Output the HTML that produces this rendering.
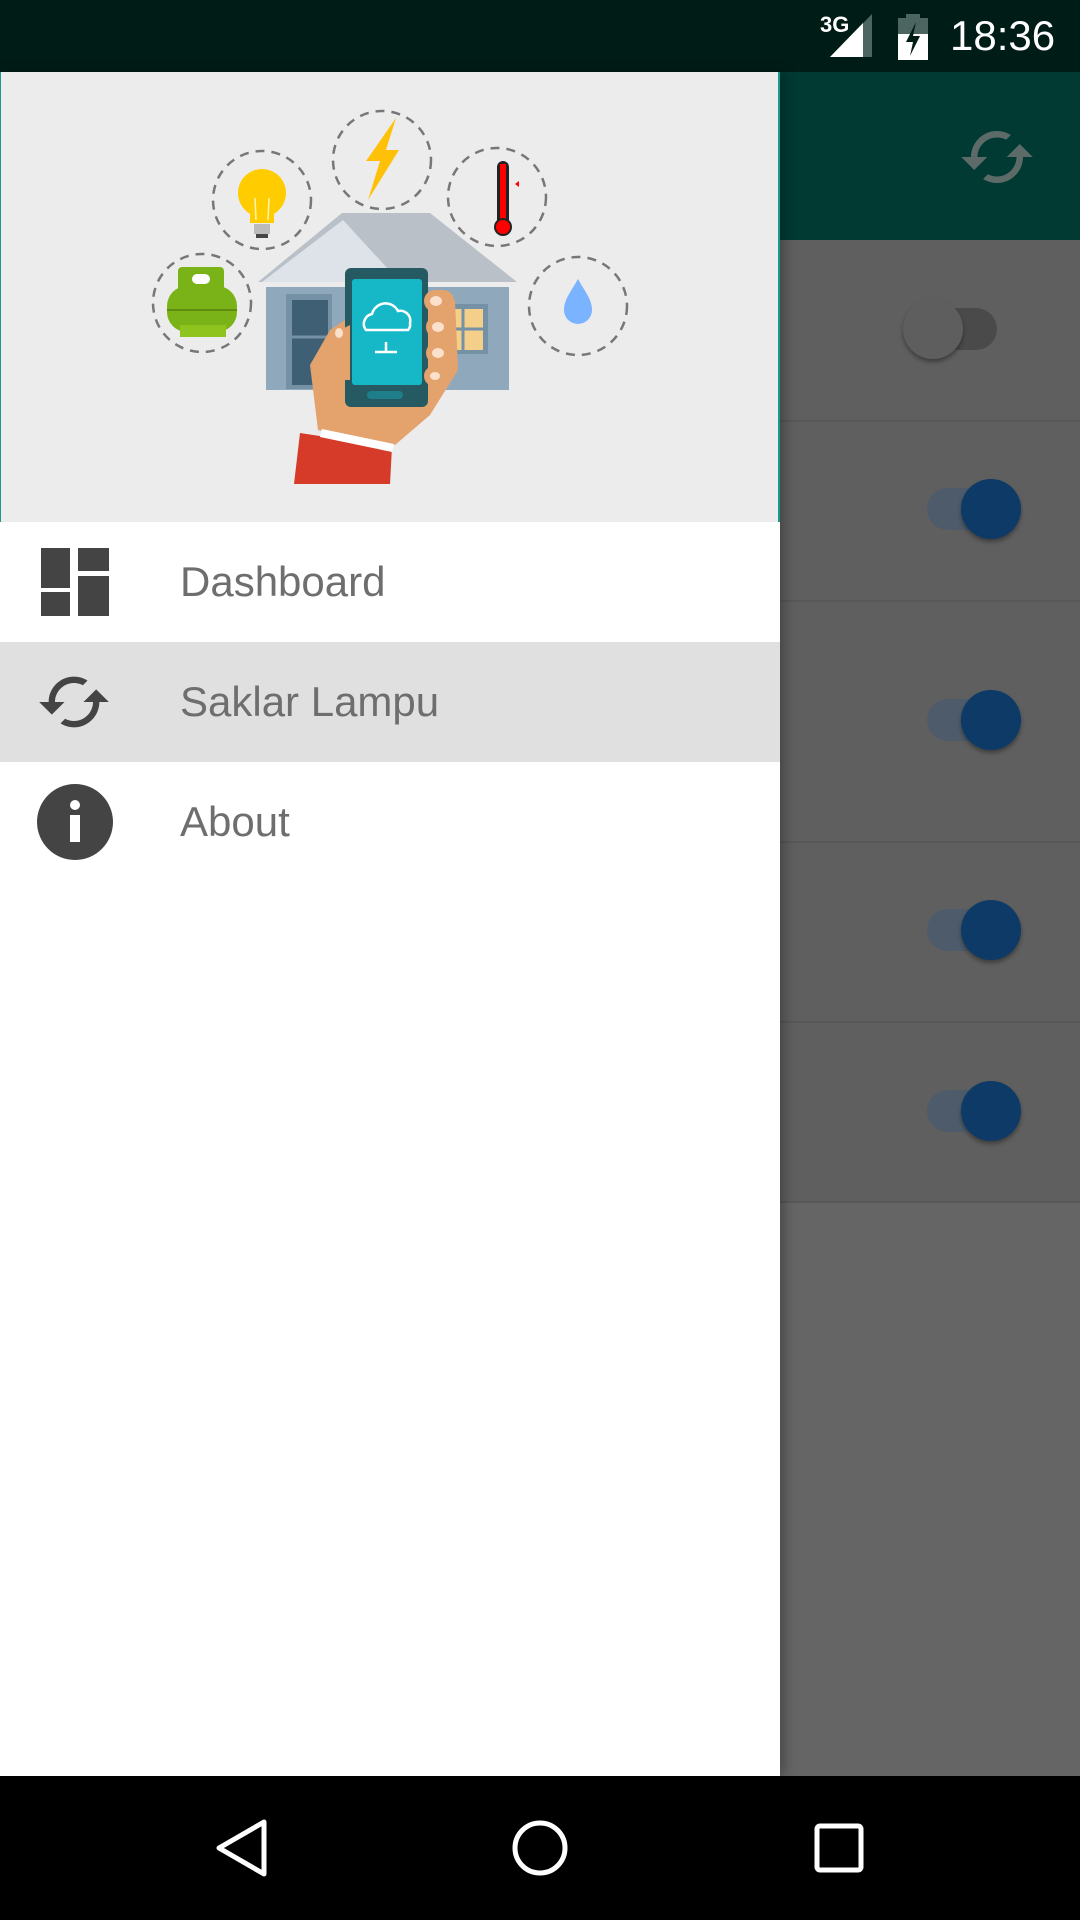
<!DOCTYPE html>
<html><head><meta charset="utf-8"><style>
*{margin:0;padding:0;box-sizing:border-box}
body{width:1080px;height:1920px;position:relative;overflow:hidden;background:#666;font-family:"Liberation Sans",sans-serif}
.abs{position:absolute}
.sep{position:absolute;left:780px;width:300px;height:2px;background:#585858}
.track{position:absolute;width:72px;height:42px;border-radius:21px}
.thumb{position:absolute;width:60px;height:60px;border-radius:50%;box-shadow:0 3px 4px rgba(0,0,0,.35)}
.item{position:absolute;left:0;width:780px;height:120px}
.item span{position:absolute;left:180px;top:36px;font-size:42px;color:#6e6e6e}
</style></head><body>
<div class="abs" style="left:0;top:0;width:1080px;height:72px;background:#001c17"></div>
<div class="abs" style="left:820px;top:12px;color:#fff;font-size:22px;font-weight:bold">3G</div>
<svg class="abs" style="left:830px;top:14px" width="45" height="45"><polygon points="42,0 42,43 0,43" fill="#4d6560"/><polygon points="33,9 33,43 0,43" fill="#fff"/></svg>
<svg class="abs" style="left:898px;top:14px" width="30" height="46"><rect x="8" y="0" width="14" height="5" fill="#4d6560"/><rect x="0" y="4" width="30" height="42" fill="#4d6560"/><rect x="0" y="20" width="30" height="26" fill="#fff"/><polygon points="18,8 8,28 15,28 12,42 22,22 15,22" fill="#001c17"/></svg>
<div class="abs" style="left:950px;top:12px;color:#fff;font-size:42px">18:36</div>
<div class="abs" style="left:780px;top:72px;width:300px;height:168px;background:#003a33"></div>
<svg class="abs" style="left:955px;top:118px" width="84" height="78" viewBox="0 0 24 24"><path fill="#5d6b68" d="M12 4V1L8 5l4 4V6c3.3 0 6 2.7 6 6 0 1-.25 2-.7 2.8l1.46 1.46C19.54 15.03 20 13.57 20 12c0-4.42-3.58-8-8-8zm0 14c-3.3 0-6-2.7-6-6 0-1 .25-2 .7-2.8L5.24 7.74C4.46 8.97 4 10.430 4 12c0 4.42 3.58 8 8 8v3l4-4-4-4v3z" transform="rotate(90 12 12)"/></svg>
<div class="abs" style="left:780px;top:240px;width:300px;height:1536px;background:#656565"></div>
<div class="abs" style="left:780px;top:240px;width:300px;height:962px;background:#5f5f5f"></div>
<div class="sep" style="top:420px"></div><div class="sep" style="top:600px"></div><div class="sep" style="top:841px"></div><div class="sep" style="top:1021px"></div><div class="sep" style="top:1201px"></div>
<div class="track" style="left:925px;top:308px;background:#4a4a4a"></div><div class="thumb" style="left:903px;top:299px;background:#5e5e5e"></div>
<div class="track" style="left:927px;top:488px;background:#4e5b6a"></div><div class="thumb" style="left:961px;top:479px;background:#0d3a66"></div>
<div class="track" style="left:927px;top:699px;background:#4e5b6a"></div><div class="thumb" style="left:961px;top:690px;background:#0d3a66"></div>
<div class="track" style="left:927px;top:909px;background:#4e5b6a"></div><div class="thumb" style="left:961px;top:900px;background:#0d3a66"></div>
<div class="track" style="left:927px;top:1090px;background:#4e5b6a"></div><div class="thumb" style="left:961px;top:1081px;background:#0d3a66"></div>
<div class="abs" style="left:0;top:72px;width:780px;height:1704px;background:#fff;box-shadow:4px 0 12px rgba(0,0,0,.3)"></div>
<div class="abs" style="left:0;top:72px;width:780px;height:450px;background:#ececec;border-left:1px solid #1a9a8a;border-right:2px solid #1a9a8a"></div>
<svg class="abs" style="left:0;top:0" width="780" height="522">
<g fill="none" stroke="#777" stroke-width="2.5" stroke-dasharray="9 7">
<circle cx="262" cy="200" r="49"/><circle cx="382" cy="160" r="49"/><circle cx="497" cy="197" r="49"/><circle cx="202" cy="303" r="49"/><circle cx="578" cy="306" r="49"/></g>
<circle cx="262" cy="193" r="24" fill="#ffcc00"/><rect x="250" y="205" width="24" height="18" fill="#ffcc00"/>
<rect x="254" y="224" width="16" height="10" fill="#bbb"/><rect x="256" y="234" width="12" height="4" fill="#444"/>
<path d="M256 220 L255 198 M268 220 L269 198" stroke="#fff5b0" stroke-width="1.5"/>
<polygon points="396,118 366,161 380,161 368,200 399,150 386,150" fill="#ffc107"/>
<rect x="497" y="161" width="12" height="70" rx="6" fill="#222"/><rect x="500" y="164" width="6" height="64" fill="#f00"/><circle cx="503" cy="227" r="9" fill="#222"/><circle cx="503" cy="227" r="7" fill="#f00"/><polygon points="519,181 515,184 519,187" fill="#f00"/>
<path d="M578 279 C570 293 564 300 564 310 a14 14 0 0 0 28 0 C592 300 586 293 578 279z" fill="#7ab3ff"/>
<rect x="178" y="267" width="46" height="28" rx="4" fill="#7ab317"/><rect x="167" y="286" width="70" height="46" rx="20" fill="#7ab317"/><rect x="180" y="325" width="46" height="12" fill="#8ec41d"/><rect x="192" y="274" width="18" height="10" rx="5" fill="#fff"/><line x1="167" y1="310" x2="237" y2="310" stroke="#5f8c10" stroke-width="2"/>
<polygon points="258,282 342,213 430,213 517,282" fill="#b9c0c8"/><polygon points="262,282 343,220 400,282" fill="#dde3e8"/>
<rect x="266" y="287" width="243" height="103" fill="#8fa8bb"/><rect x="286" y="294" width="46" height="95" fill="#7591a6"/><rect x="292" y="300" width="36" height="85" fill="#3f5f74"/><line x1="292" y1="337" x2="328" y2="337" stroke="#7591a6" stroke-width="3"/>
<rect x="438" y="304" width="50" height="50" fill="#7591a6"/><rect x="443" y="309" width="40" height="41" fill="#f4cf8a"/><line x1="463" y1="309" x2="463" y2="350" stroke="#7591a6" stroke-width="3"/><line x1="443" y1="329" x2="483" y2="329" stroke="#7591a6" stroke-width="3"/>
<path d="M330 330 L310 365 L318 430 L395 445 L430 415 L458 370 L455 300 L440 290 L428 300 L345 320 Z" fill="#e4a26d"/>
<polygon points="300,433 392,447 390,484 294,484" fill="#d63a28"/><polygon points="322,429 394,444 392,452 320,437" fill="#fff"/>
<rect x="345" y="268" width="83" height="139" rx="6" fill="#265a63"/><rect x="352" y="279" width="70" height="106" rx="3" fill="#16b8c8"/><rect x="367" y="391" width="36" height="8" rx="4" fill="#1e7e8a"/>
<path d="M366 330 a10 10 0 0 1 6 -16 a14 14 0 0 1 26 -3 a10 10 0 0 1 12 12 a8 8 0 0 1 -2 7 z" fill="none" stroke="#fff" stroke-width="2.5"/>
<path d="M386 342 v10 M375 352 h22" stroke="#fff" stroke-width="2.5"/>
<path d="M340 330 q-8 30 0 50 l10 0 l0 -55z" fill="#e4a26d"/><ellipse cx="339" cy="333" rx="4" ry="5" fill="#fbe0cc"/>
<g fill="#e4a26d"><rect x="424" y="290" width="30" height="22" rx="11"/><rect x="426" y="316" width="30" height="22" rx="11"/><rect x="426" y="342" width="30" height="22" rx="11"/><rect x="424" y="366" width="28" height="20" rx="10"/></g>
<g fill="#fbe0cc"><ellipse cx="436" cy="301" rx="6" ry="5"/><ellipse cx="438" cy="327" rx="6" ry="5"/><ellipse cx="438" cy="353" rx="6" ry="5"/><ellipse cx="435" cy="376" rx="5" ry="4"/></g>
</svg>
<div class="item" style="top:522px"><svg class="abs" style="left:41px;top:26px" width="68" height="68"><rect x="0" y="0" width="29" height="40" fill="#444"/><rect x="0" y="44" width="29" height="24" fill="#444"/><rect x="37" y="0" width="31" height="23" fill="#444"/><rect x="37" y="28" width="31" height="40" fill="#444"/></svg><span>Dashboard</span></div>
<div class="item" style="top:642px;background:#e0e0e0"><svg class="abs" style="left:32px;top:22px" width="84" height="76" viewBox="0 0 24 24"><path fill="#444" d="M12 4V1L8 5l4 4V6c3.3 0 6 2.7 6 6 0 1-.25 2-.7 2.8l1.46 1.46C19.54 15.03 20 13.57 20 12c0-4.42-3.58-8-8-8zm0 14c-3.3 0-6-2.7-6-6 0-1 .25-2 .7-2.8L5.24 7.74C4.46 8.970 4 10.43 4 12c0 4.42 3.58 8 8 8v3l4-4-4-4v3z" transform="rotate(90 12 12)"/></svg><span>Saklar Lampu</span></div>
<div class="item" style="top:762px"><svg class="abs" style="left:37px;top:22px" width="76" height="76"><circle cx="38" cy="38" r="38" fill="#444"/><circle cx="38" cy="21" r="5" fill="#fff"/><rect x="33" y="31" width="10" height="27" fill="#fff"/></svg><span>About</span></div>
<div class="abs" style="left:0;top:1776px;width:1080px;height:144px;background:#000"></div>
<svg class="abs" style="left:0;top:1776px" width="1080" height="144">
<polygon points="264,46 264,98 219,72" fill="none" stroke="#fff" stroke-width="5" stroke-linejoin="round"/>
<circle cx="540" cy="72" r="25" fill="none" stroke="#fff" stroke-width="5"/>
<rect x="817" y="50" width="44" height="44" rx="3" fill="none" stroke="#fff" stroke-width="5"/>
</svg>
</body></html>
